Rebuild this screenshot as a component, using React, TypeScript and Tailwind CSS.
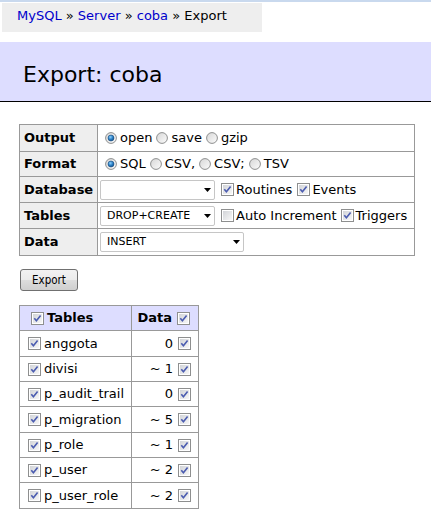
import React, { useId } from "react";

function Checkbox({ checked = true }: { checked?: boolean }) {
  const id = useId().replace(/:/g, "");
  return (
    <svg width="13" height="13" viewBox="0 0 13 13" className="shrink-0 block">
      <defs>
        <linearGradient id={`cb${id}`} x1="0" y1="0" x2="1" y2="1">
          <stop offset="0" stopColor="#d2d4d8" />
          <stop offset="1" stopColor="#f7f7f7" />
        </linearGradient>
      </defs>
      <rect x="0.5" y="0.5" width="12" height="12" fill="#ffffff" stroke="#8e8f8f" />
      <rect x="2" y="2" width="9" height="9" fill={`url(#cb${id})`} />
      {checked && (
        <path d="M3.3 6.2 L5.4 8.8 L9.6 3.4" stroke="#4b5cb0" strokeWidth="1.6" fill="none" />
      )}
    </svg>
  );
}

function Radio({ checked = false }: { checked?: boolean }) {
  const id = useId().replace(/:/g, "");
  return (
    <svg width="12" height="12" viewBox="0 0 12 12" className="shrink-0 block">
      <defs>
        <linearGradient id={`rg${id}`} x1="0" y1="0" x2="1" y2="1">
          <stop offset="0" stopColor="#d6d6d6" />
          <stop offset="1" stopColor="#fcfcfc" />
        </linearGradient>
        <radialGradient id={`rd${id}`} cx="0.4" cy="0.35" r="0.7">
          <stop offset="0" stopColor="#8fd2ff" />
          <stop offset="0.55" stopColor="#2a7fc4" />
          <stop offset="1" stopColor="#0e4a86" />
        </radialGradient>
      </defs>
      <circle cx="6" cy="6" r="5.4" fill={`url(#rg${id})`} stroke="#8e8f8f" strokeWidth="1" />
      {checked && <circle cx="6" cy="6" r="3" fill={`url(#rd${id})`} stroke="#1a4d80" strokeWidth="0.6" />}
    </svg>
  );
}

function Select({ value, width }: { value: string; width: string }) {
  return (
    <div className={`${width} h-[20px] shrink-0 bg-white border border-[#c6c6c6] rounded-[2px] flex items-center pl-[6px] text-[11px] leading-[14px]`}>
      <span className="flex-1 whitespace-nowrap">{value}</span>
      <svg width="7" height="4" viewBox="0 0 7 4" className="mr-[3px] shrink-0 block">
        <path d="M0 0 H7 L3.5 4 Z" fill="#000" />
      </svg>
    </div>
  );
}

function Opt({ checked, label }: { checked?: boolean; label: string }) {
  return (
    <span className="flex items-center">
      <Radio checked={checked} />
      <span className="ml-[3px] whitespace-nowrap">{label}</span>
    </span>
  );
}

function Chk({ checked, label }: { checked?: boolean; label: string }) {
  return (
    <span className="flex items-center">
      <Checkbox checked={checked} />
      <span className="ml-[2px] whitespace-nowrap">{label}</span>
    </span>
  );
}

function FormRow({ label, h, children, pl }: { label: string; h: string; children: React.ReactNode; pl: string }) {
  return (
    <div className={`flex ${h}`}>
      <div className="w-[78px] shrink-0 bg-[#eeeeee] border-r border-b border-[#999999] font-bold pl-[4px] flex items-center">
        {label}
      </div>
      <div className={`flex-1 border-r border-b border-[#999999] flex items-center ${pl}`}>{children}</div>
    </div>
  );
}

const rows: { name: string; data: string; h: string }[] = [
  { name: "anggota", data: "0", h: "h-[26px]" },
  { name: "divisi", data: "~ 1", h: "h-[25px]" },
  { name: "p_audit_trail", data: "0", h: "h-[25px]" },
  { name: "p_migration", data: "~ 5", h: "h-[26px]" },
  { name: "p_role", data: "~ 1", h: "h-[25px]" },
  { name: "p_user", data: "~ 2", h: "h-[25px]" },
  { name: "p_user_role", data: "~ 2", h: "h-[26px]" },
];

export default function App() {
  return (
    <div className="min-h-[522px] bg-white text-black text-[13px] leading-[16px] font-['DejaVu_Sans',Verdana,sans-serif]">
      <div className="h-[2px] bg-[#c9d9ee]" />
      <div className="mt-[1px] ml-[2px] w-[260px] h-[29px] bg-[#eeeeee] pl-[15px] pb-[3px] flex items-center">
        <span className="whitespace-pre">
          <span className="text-[#0000cc]">MySQL</span> » <span className="text-[#0000cc]">Server</span> »{" "}
          <span className="text-[#0000cc]">coba</span> » Export
        </span>
      </div>

      <h2 className="mt-[10px] h-[60px] bg-[#ddddff] border-b border-black pl-[23px] pt-[6px] flex items-center text-[22px] leading-[26px] font-normal">
        Export: coba
      </h2>

      <div className="mt-[22px] ml-[19px] w-[396px] border-t border-l border-[#999999]">
        <FormRow label="Output" h="h-[27px]" pl="pl-[7px]">
          <div className="flex items-center gap-[4px]">
            <Opt checked label="open" />
            <Opt label="save" />
            <Opt label="gzip" />
          </div>
        </FormRow>
        <FormRow label="Format" h="h-[25px]" pl="pl-[7px]">
          <div className="flex items-center gap-[4px]">
            <Opt checked label="SQL" />
            <Opt label="CSV," />
            <Opt label="CSV;" />
            <Opt label="TSV" />
          </div>
        </FormRow>
        <FormRow label="Database" h="h-[26px]" pl="pl-[2px]">
          <Select value="" width="w-[115px]" />
          <div className="ml-[6px] flex items-center gap-[5px]">
            <Chk checked label="Routines" />
            <Chk checked label="Events" />
          </div>
        </FormRow>
        <FormRow label="Tables" h="h-[26px]" pl="pl-[2px]">
          <Select value="DROP+CREATE" width="w-[115px]" />
          <div className="ml-[6px] flex items-center gap-[4px]">
            <Chk checked={false} label="Auto Increment" />
            <Chk checked label="Triggers" />
          </div>
        </FormRow>
        <FormRow label="Data" h="h-[27px]" pl="pl-[2px]">
          <Select value="INSERT" width="w-[144px]" />
        </FormRow>
      </div>

      <button className="block mt-[13px] ml-[20px] w-[58px] h-[22px] rounded-[3px] border border-[#707070] bg-[linear-gradient(#f2f2f2_0%,#ebebeb_50%,#dddddd_50%,#cfcfcf_100%)] text-[11.5px] leading-[14px] text-black font-['DejaVu_Sans_Condensed','Liberation_Sans',sans-serif]">
        Export
      </button>

      <div className="mt-[14px] ml-[19px] w-[180px] border-t border-l border-[#999999]">
        <div className="flex h-[25px] bg-[#ddddff] font-bold">
          <div className="w-[112px] shrink-0 border-r border-b border-[#999999] flex items-center pl-[11px]">
            <Checkbox />
            <span className="ml-[3px]">Tables</span>
          </div>
          <div className="flex-1 border-r border-b border-[#999999] flex items-center justify-end pr-[8px]">
            <span className="mr-[5px]">Data</span>
            <Checkbox />
          </div>
        </div>
        {rows.map((r) => (
          <div key={r.name} className={`flex ${r.h}`}>
            <div className="w-[112px] shrink-0 border-r border-b border-[#999999] flex items-center pl-[8px]">
              <Checkbox />
              <span className="ml-[3px] whitespace-nowrap">{r.name}</span>
            </div>
            <div className="flex-1 border-r border-b border-[#999999] flex items-center justify-end pr-[7px]">
              <span className="mr-[5px] whitespace-pre">{r.data}</span>
              <Checkbox />
            </div>
          </div>
        ))}
      </div>
    </div>
  );
}
